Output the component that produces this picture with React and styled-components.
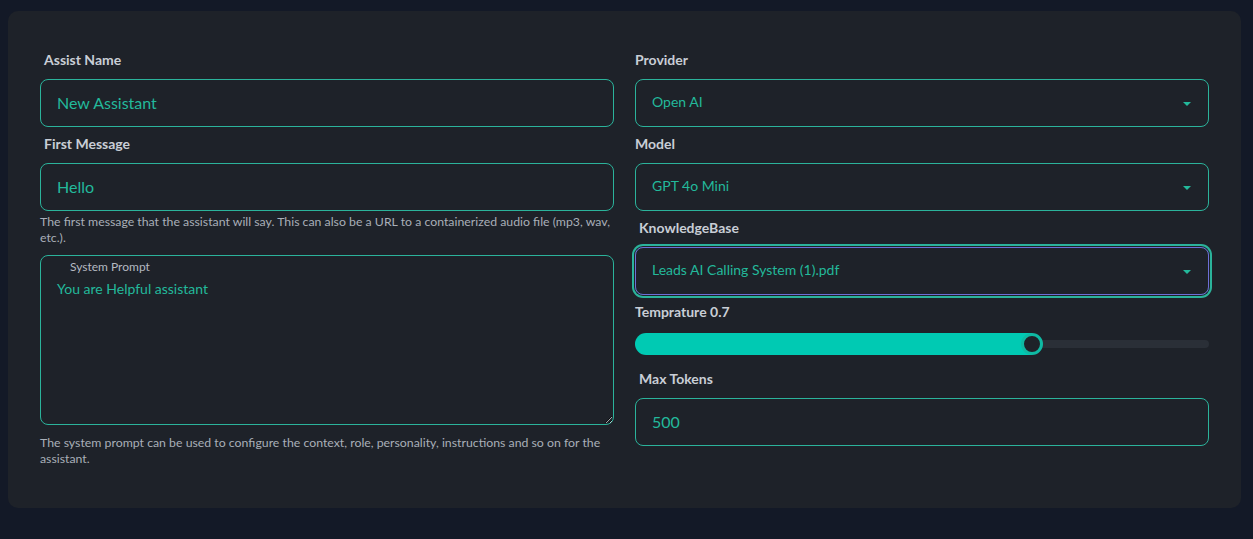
import styled, { createGlobalStyle } from 'styled-components';

const Global = createGlobalStyle`
  body {
    margin: 0;
    background: #131927;
    font-family: Lato, "Noto Sans", sans-serif;
  }
  * { box-sizing: border-box; }
`

const Page = styled.div`
  padding: 11px 12px 32px 8px;
`

const Card = styled.div`
  background: #1e2229;
  border-radius: 10px;
  padding: 39px 32px 40px 32px;
  display: grid;
  grid-template-columns: 574px 574px;
  column-gap: 21px;
  height: 497px;
`

const Column = styled.div`
  display: flex;
  flex-direction: column;
`

const Label = styled.label`
  display: block;
  font-size: 14px;
  font-weight: 700;
  line-height: 20px;
  color: #c9ced6;
  margin: ${p => p.$first ? '0' : '7px'} 0 9px ${p => p.$indent ? '4px' : '0'};
`

const Input = styled.input`
  width: 100%;
  height: 48px;
  background: transparent;
  border: 1px solid #2bb39b;
  border-radius: 8px;
  padding: 0 16px 2px;
  font-family: inherit;
  font-size: 16px;
  color: #23b99b;
  outline: none;
`

const SelectBox = styled.div`
  position: relative;
  height: 48px;
  border: 1px solid ${p => p.$focused ? '#6d6fd6' : '#2bb39b'};
  border-radius: 8px;
  display: flex;
  align-items: center;
  justify-content: space-between;
  padding: 0 16px 3px;
  font-size: 14px;
  color: #23b99b;
  box-shadow: ${p => p.$focused ? '0 0 0 1px #1e2229, 0 0 0 3px #2bb39b' : 'none'};
`

const Caret = styled.span`
  width: 0;
  height: 0;
  border-left: 4px solid transparent;
  border-right: 4px solid transparent;
  border-top: 4px solid #23b99b;
  margin: 4px 1px 0 0;
`

const Helper = styled.p`
  margin: ${p => p.$top}px 0 0;
  font-size: 12.3px;
  line-height: 16px;
  color: #a9afb8;
`

const PromptWrap = styled.div`
  position: relative;
  margin-top: 9px;
`

const PromptLabel = styled.span`
  position: absolute;
  left: 30px;
  top: 4px;
  font-size: 12px;
  color: #b4b9c1;
`

const TextArea = styled.textarea`
  display: block;
  width: 100%;
  height: 170px;
  background: transparent;
  border: 1px solid #2bb39b;
  border-radius: 8px;
  padding: 23px 16px 8px;
  font-family: inherit;
  font-size: 14px;
  line-height: 20px;
  color: #23b99b;
  outline: none;
  resize: vertical;
`

const Slider = styled.div`
  position: relative;
  height: 24px;
  margin: 1px 0 6px;
  display: flex;
  align-items: center;
`

const Track = styled.div`
  width: 100%;
  height: 8px;
  border-radius: 4px;
  background: #2a2f37;
`

const Fill = styled.div`
  position: absolute;
  left: 0;
  top: 1px;
  height: 22px;
  border-radius: 11px 0 0 11px;
  background: #00cab3;
`

const Thumb = styled.div`
  position: absolute;
  top: 1px;
  width: 22px;
  height: 22px;
  margin-left: -11px;
  border-radius: 50%;
  background: #1e2229;
  border: 3px solid #0fb9a3;
`

export default function App() {
  const temp = 0.7;
  const pct = 69.2;
  return (
    <Page>
      <Global />
      <Card>
        <Column>
          <Label $first $indent>Assist Name</Label>
          <Input defaultValue="New Assistant" />
          <Label $indent>First Message</Label>
          <Input defaultValue="Hello" />
          <Helper $top={3}>
            The first message that the assistant will say. This can also be a URL to a containerized audio file (mp3, wav, etc.).
          </Helper>
          <PromptWrap>
            <PromptLabel>System Prompt</PromptLabel>
            <TextArea defaultValue="You are Helpful assistant" />
          </PromptWrap>
          <Helper $top={10}>
            The system prompt can be used to configure the context, role, personality, instructions and so on for the assistant.
          </Helper>
        </Column>
        <Column>
          <Label $first>Provider</Label>
          <SelectBox>Open AI<Caret /></SelectBox>
          <Label>Model</Label>
          <SelectBox>GPT 4o Mini<Caret /></SelectBox>
          <Label $indent>KnowledgeBase</Label>
          <SelectBox $focused>Leads AI Calling System (1).pdf<Caret /></SelectBox>
          <Label>Temprature {temp}</Label>
          <Slider>
            <Track />
            <Fill style={{ width: `${pct}%` }} />
            <Thumb style={{ left: `${pct}%` }} />
          </Slider>
          <Label $indent>Max Tokens</Label>
          <Input defaultValue="500" />
        </Column>
      </Card>
    </Page>
  );
}
